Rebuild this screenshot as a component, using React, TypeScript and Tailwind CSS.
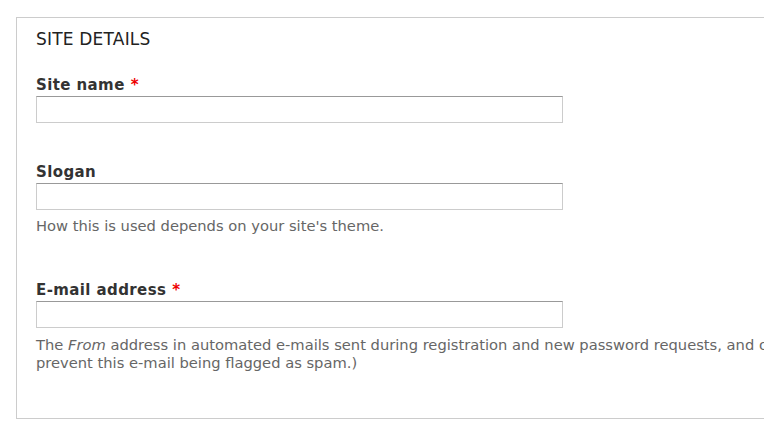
const font = { fontFamily: '"DejaVu Sans", Verdana, sans-serif' };

function Label({ text, required }: { text: string; required?: boolean }) {
  return (
    <label className="block h-[18px] text-[15px] leading-[18px] font-bold tracking-[0.4px] text-[#333] mb-[2px]">
      {text}
      {required && <span className="text-[#e00] ml-[6px]">*</span>}
    </label>
  );
}

function TextInput() {
  return (
    <input
      type="text"
      className="block w-[527px] h-[27px] border border-[#ccc] border-t-[#999] bg-white outline-none"
    />
  );
}

export default function App() {
  return (
    <div className="w-[764px] h-[425px] overflow-hidden bg-white" style={font}>
      <div className="ml-[16px] mt-[17px] w-[1300px] border border-[#ccc] pt-[11px] pl-[19px] pb-[46px]">
        <div className="text-[17px] leading-[20px] tracking-[0.2px] text-[#222] uppercase">Site details</div>

        <div className="mt-[27px]">
          <Label text="Site name" required />
          <TextInput />
        </div>

        <div className="mt-[40px]">
          <Label text="Slogan" />
          <TextInput />
          <p className="mt-[7px] text-[14.7px] leading-[18px] text-[#666]">
            How this is used depends on your site's theme.
          </p>
        </div>

        <div className="mt-[46px]">
          <Label text="E-mail address" required />
          <TextInput />
          <p className="mt-[8px] text-[14.7px] leading-[18px] text-[#666] whitespace-nowrap">
            The <em>From</em> address in automated e-mails sent during registration and new password requests, and other notifications. (Use an address ending in your site's domain to help
            <br />
            prevent this e-mail being flagged as spam.)
          </p>
        </div>
      </div>
    </div>
  );
}
